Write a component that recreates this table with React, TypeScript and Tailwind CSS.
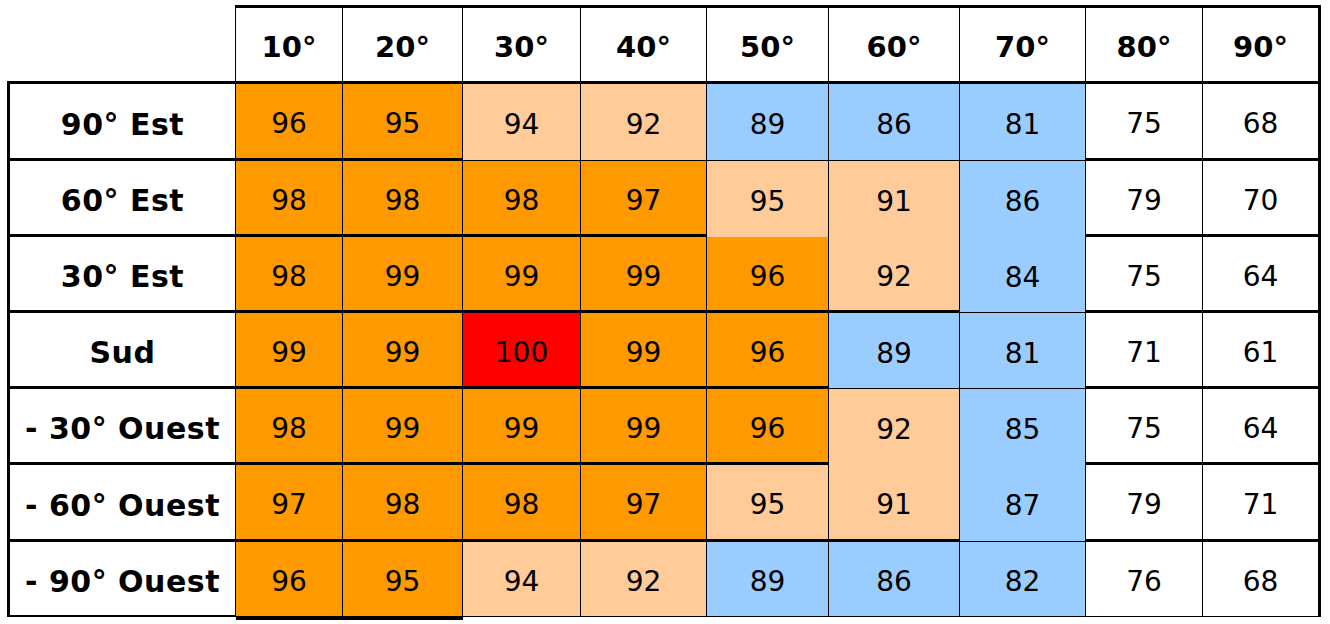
import clsx from 'clsx';

// --- Data ---

type Fill = 'o' | 'p' | 'b' | 'r' | 'w';
type Edge = 'T' | 't' | 'n';

const angles = ['10°', '20°', '30°', '40°', '50°', '60°', '70°', '80°', '90°'];

const rows: { label: string; values: number[]; fills: Fill[]; bottom: Edge[] }[] = [
  {
    label: '90° Est',
    values: [96, 95, 94, 92, 89, 86, 81, 75, 68],
    fills: ['o', 'o', 'p', 'p', 'b', 'b', 'b', 'w', 'w'],
    bottom: ['T', 'T', 't', 't', 't', 't', 't', 'T', 'T'],
  },
  {
    label: '60° Est',
    values: [98, 98, 98, 97, 95, 91, 86, 79, 70],
    fills: ['o', 'o', 'o', 'o', 'p', 'p', 'b', 'w', 'w'],
    bottom: ['T', 'T', 'T', 'T', 'n', 'n', 'n', 'T', 'T'],
  },
  {
    label: '30° Est',
    values: [98, 99, 99, 99, 96, 92, 84, 75, 64],
    fills: ['o', 'o', 'o', 'o', 'o', 'p', 'b', 'w', 'w'],
    bottom: ['T', 'T', 'T', 'T', 'T', 'T', 't', 'T', 'T'],
  },
  {
    label: 'Sud',
    values: [99, 99, 100, 99, 96, 89, 81, 71, 61],
    fills: ['o', 'o', 'r', 'o', 'o', 'b', 'b', 'w', 'w'],
    bottom: ['T', 'T', 'T', 'T', 'T', 't', 't', 'T', 'T'],
  },
  {
    label: '- 30° Ouest',
    values: [98, 99, 99, 99, 96, 92, 85, 75, 64],
    fills: ['o', 'o', 'o', 'o', 'o', 'p', 'b', 'w', 'w'],
    bottom: ['T', 'T', 'T', 'T', 'T', 'n', 'n', 'T', 'T'],
  },
  {
    label: '- 60° Ouest',
    values: [97, 98, 98, 97, 95, 91, 87, 79, 71],
    fills: ['o', 'o', 'o', 'o', 'p', 'p', 'b', 'w', 'w'],
    bottom: ['T', 'T', 'T', 'T', 'T', 'T', 't', 'T', 'T'],
  },
  {
    label: '- 90° Ouest',
    values: [96, 95, 94, 92, 89, 86, 82, 76, 68],
    fills: ['o', 'o', 'p', 'p', 'b', 'b', 'b', 'w', 'w'],
    bottom: ['t', 't', 't', 't', 't', 't', 't', 't', 't'],
  },
];

const fillClass: Record<Fill, string> = {
  o: 'bg-[#ff9900]',
  p: 'bg-[#ffcc99]',
  b: 'bg-[#99ccff]',
  r: 'bg-[#ff0000]',
  w: 'bg-white',
};

const bottomClass: Record<Edge, string> = {
  T: 'border-b-[3px]',
  t: 'border-b',
  n: 'border-b-0',
};

// --- Main Component ---

export default function App() {
  const lastRow = rows.length - 1;

  return (
    <div className="min-h-screen bg-white pl-[7px] pt-[5px] font-['DejaVu_Sans',Verdana,sans-serif] text-black">
      <div className="grid grid-cols-[229px_107px_120px_118px_126px_122px_131px_126px_117px_118px] grid-rows-[79px_77px_76px_76px_76px_76px_77px_75px]">
        {/* Header row */}
        <div className="border-b-[3px] border-r border-black box-border" />
        {angles.map((a, j) => (
          <div
            key={a}
            className={clsx(
              'box-border flex items-center justify-center border-t-[3px] border-b-[3px] border-black bg-white pt-[6px] text-[29px] font-bold',
              j === angles.length - 1 ? 'border-r-[3px]' : 'border-r'
            )}
          >
            {a}
          </div>
        ))}

        {/* Body rows */}
        {rows.map((row, i) => (
          <div key={row.label} className="contents">
            <div
              className={clsx(
                'box-border flex items-center justify-center border-l-[3px] border-r border-black bg-white pt-[6px] text-[30px] font-bold tracking-[0.5px] whitespace-nowrap',
                i === lastRow ? 'border-b-2' : 'border-b-[3px]'
              )}
            >
              {row.label}
            </div>
            {row.values.map((v, j) => (
              <div
                key={j}
                className={clsx(
                  'box-border flex items-center justify-center border-black pt-[6px] text-[28px]',
                  fillClass[row.fills[j]],
                  bottomClass[row.bottom[j]],
                  j === row.values.length - 1 ? 'border-r-[3px]' : 'border-r',
                  i === lastRow && j < 2 && 'shadow-[0_3px_0_#000]'
                )}
              >
                {v}
              </div>
            ))}
          </div>
        ))}
      </div>
    </div>
  );
}
